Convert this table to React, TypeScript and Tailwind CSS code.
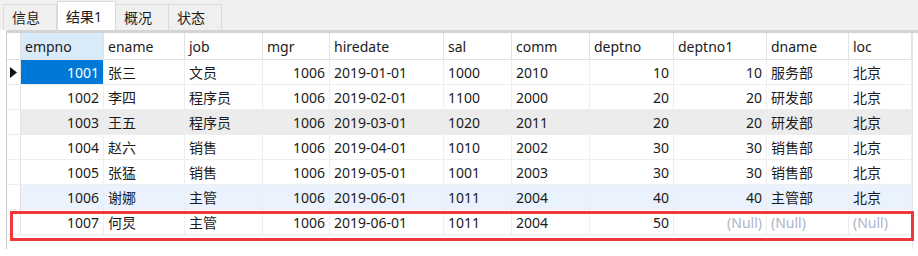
import React from "react";

type Col = {
  key: string;
  width: string;
  right?: boolean;
};

const cols: Col[] = [
  { key: "empno", width: "w-[83px]", right: true },
  { key: "ename", width: "w-[81px]" },
  { key: "job", width: "w-[78px]" },
  { key: "mgr", width: "w-[67px]", right: true },
  { key: "hiredate", width: "w-[114px]" },
  { key: "sal", width: "w-[68px]" },
  { key: "comm", width: "w-[78px]" },
  { key: "deptno", width: "w-[84px]", right: true },
  { key: "deptno1", width: "w-[93px]", right: true },
  { key: "dname", width: "w-[82px]" },
  { key: "loc", width: "w-[63px]" },
];

const rows: (string | null)[][] = [
  ["1001", "张三", "文员", "1006", "2019-01-01", "1000", "2010", "10", "10", "服务部", "北京"],
  ["1002", "李四", "程序员", "1006", "2019-02-01", "1100", "2000", "20", "20", "研发部", "北京"],
  ["1003", "王五", "程序员", "1006", "2019-03-01", "1020", "2011", "20", "20", "研发部", "北京"],
  ["1004", "赵六", "销售", "1006", "2019-04-01", "1010", "2002", "30", "30", "销售部", "北京"],
  ["1005", "张猛", "销售", "1006", "2019-05-01", "1001", "2003", "30", "30", "销售部", "北京"],
  ["1006", "谢娜", "主管", "1006", "2019-06-01", "1011", "2004", "40", "40", "主管部", "北京"],
  ["1007", "何炅", "主管", "1006", "2019-06-01", "1011", "2004", "50", null, null, null],
];

const tabs = ["信息", "结果1", "概况", "状态"];

const rowBg = (i: number) => {
  if (i === 2) return "bg-[#ececec]";
  if (i === 5) return "bg-[#eaf3fd]";
  return "bg-white";
};

const App: React.FC = () => {
  return (
    <div
      className="w-[918px] h-[256px] bg-white text-[14px] text-[#1b1b1b] overflow-hidden"
      style={{ fontFamily: '"Noto Sans", "Noto Sans CJK SC", sans-serif' }}>
      <div className="h-[30px] bg-[#f0f0f0] flex items-end pl-[3px]">
        {tabs.map((t, i) =>
          i === 1 ? (
            <div
              key={t}
              className="w-[59px] h-[29px] bg-white border border-b-0 border-[#dadada] flex items-center pl-[8px]">
              {t}
            </div>
          ) : (
            <div
              key={t}
              className="w-[54px] h-[26px] bg-[#f0f0f0] border border-b-0 border-[#dadada] -ml-px first:ml-0 flex items-center pl-[8px]">
              {t}
            </div>
          )
        )}
      </div>
      <div className="h-[3px] bg-[#d4d4d4] ml-[6px]" />
      <div className="relative ml-[6px] w-[907px] h-[216px] border-l border-[#c8c8c8] border-r border-r-[#e4e4e4]">
        <div className="flex h-[27px] border-b border-[#e2e2e2]">
          <div className="w-[14px] border-r border-[#e2e2e2]" />
          {cols.map((c, i) => (
            <div
              key={c.key}
              className={`${c.width} border-r border-[#e2e2e2] flex items-center px-[4px] ${i === 0 ? "bg-[#d9eaf8]" : ""}`}>
              {c.key}
            </div>
          ))}
        </div>
        {rows.map((r, ri) => (
          <div key={ri} className={`flex h-[25px] border-b border-[#eeeeee] ${rowBg(ri)}`}>
            <div className="w-[14px] border-r border-[#e2e2e2] bg-white flex items-center justify-center">
              {ri === 0 && (
                <svg width="7" height="11" viewBox="0 0 7 11">
                  <path d="M0 0 L7 5.5 L0 11 Z" fill="#111" />
                </svg>
              )}
            </div>
            {cols.map((c, ci) => {
              const v = r[ci];
              const sel = ri === 0 && ci === 0;
              return (
                <div
                  key={c.key}
                  className={`${c.width} border-r border-[#eeeeee] flex items-center px-[4px] whitespace-nowrap ${
                    c.right ? "justify-end" : ""
                  } ${sel ? "bg-[#0078d7] text-white" : ""} ${v === null ? "text-[#aeb3c9]" : ""}`}>
                  {v === null ? "(Null)" : v}
                </div>
              );
            })}
          </div>
        ))}
        <div className="absolute left-[3px] top-[178px] w-[904px] h-[30px] border-[3px] border-[#f0373b] pointer-events-none" />
      </div>
    </div>
  );
};

export default App;
